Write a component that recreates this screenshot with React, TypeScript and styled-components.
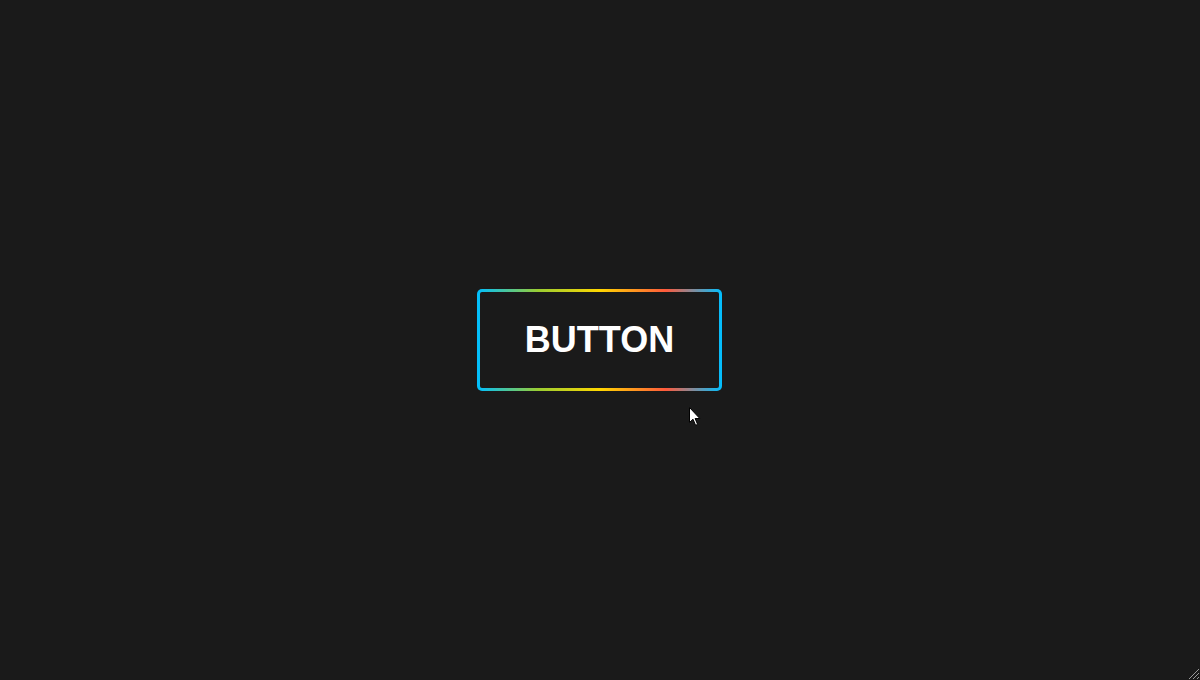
import React from "react";
import styled, { createGlobalStyle } from "styled-components";

const Global = createGlobalStyle`
  html, body { margin: 0; padding: 0; background: #1a1a1a; }
  #root { height: 680px; }
`;

const Page = styled.main`
  position: relative;
  width: 1200px;
  height: 680px;
  background: #1a1a1a;
  display: flex;
  align-items: center;
  justify-content: center;
  font-family: "Liberation Sans", Arial, sans-serif;
`;

const GradientButton = styled.button`
  box-sizing: border-box;
  width: 245px;
  height: 102px;
  margin-left: -1px;
  border: 3px solid transparent;
  border-radius: 5px;
  background:
    linear-gradient(#1a1a1a, #1a1a1a) padding-box,
    linear-gradient(90deg, #00bfff 0%, #9acd32 25%, #ffd700 50%, #ff5a3c 77%, #00bfff 100%) border-box;
  color: #ffffff;
  font-family: "Liberation Sans", Arial, sans-serif;
  font-weight: 700;
  font-size: 36px;
  letter-spacing: 0;
  cursor: pointer;
  padding: 0;
`;

const Cursor = styled.svg`
  position: absolute;
  left: 689px;
  top: 407px;
`;

const Grip = styled.svg`
  position: absolute;
  right: 0;
  bottom: 0;
`;

export default function App() {
  return (
    <>
      <Global />
      <Page>
        <GradientButton>BUTTON</GradientButton>
        <Cursor width="13" height="20" viewBox="0 0 13 20">
          <path d="M0.5 0.5 L0.5 15.5 L4 12.2 L6.6 18.3 L8.6 17.4 L6.1 11.5 L10.8 11.5 Z" fill="#ffffff" stroke="#000000" strokeWidth="1" />
        </Cursor>
        <Grip width="12" height="12" viewBox="0 0 12 12">
          <path d="M11 1 L1 11 M11 5 L5 11 M11 9 L9 11" stroke="#9a9a9a" strokeWidth="1" />
        </Grip>
      </Page>
    </>
  );
}
